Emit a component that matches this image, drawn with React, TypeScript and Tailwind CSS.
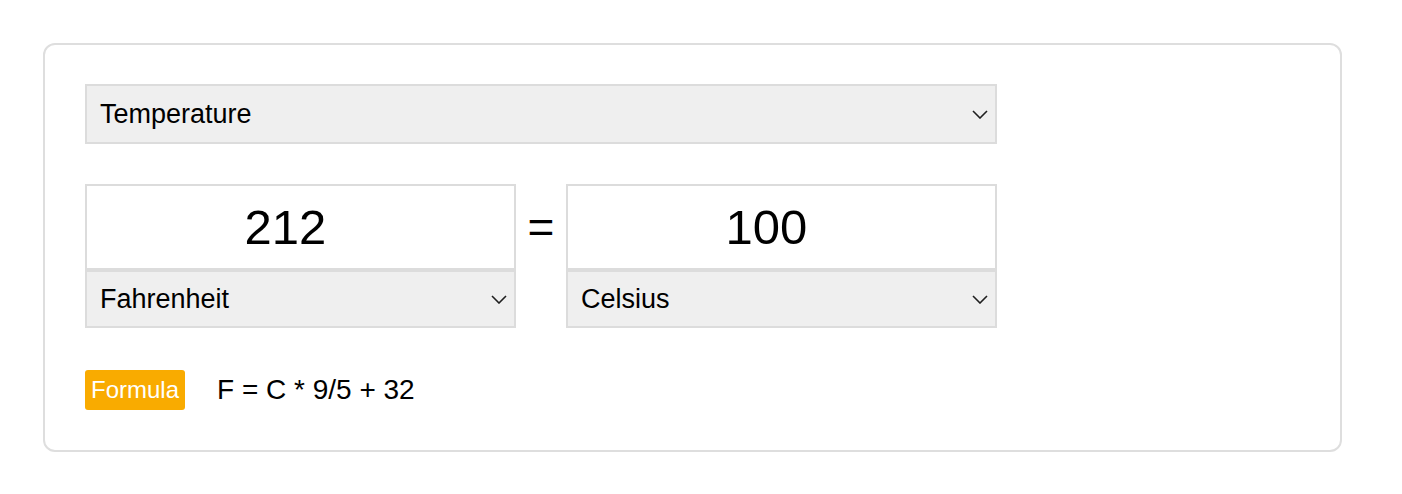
import React from 'react'

function Chevron() {
  return (
    <svg width="16" height="9" viewBox="0 0 16 9" fill="none" className="shrink-0">
      <path d="M1 1l7 7 7-7" stroke="#1f1f1f" strokeWidth="1.6" />
    </svg>
  )
}

function FakeSelect({ label, className }: { label: string; className: string }) {
  return (
    <div
      className={`flex items-center justify-between border-2 border-[#dcdcdc] bg-[#efefef] pl-[13px] pr-[7px] text-[27px] text-black ${className}`}
    >
      <span>{label}</span>
      <Chevron />
    </div>
  )
}

function UnitColumn({ value, unit }: { value: string; unit: string }) {
  return (
    <div className="flex w-[431px] flex-col">
      <div className="flex h-[86px] items-center justify-center border-2 border-[#dcdcdc] bg-white pr-[30px] text-[49px] leading-none text-black">
        {value}
      </div>
      <FakeSelect label={unit} className="h-[58px]" />
    </div>
  )
}

export default function App() {
  return (
    <div className="min-h-[494px] bg-white pl-[43px] pt-[43px] font-['Liberation_Sans',Arial,sans-serif]">
      <div className="h-[409px] w-[1299px] rounded-[12px] border-2 border-[#dedede] bg-white pl-[40px] pt-[39px]">
        <FakeSelect label="Temperature" className="h-[60px] w-[912px]" />

        <div className="mt-[40px] flex">
          <UnitColumn value="212" unit="Fahrenheit" />
          <div className="flex h-[86px] w-[50px] items-center justify-center text-[46px] leading-none text-black">
            =
          </div>
          <UnitColumn value="100" unit="Celsius" />
        </div>

        <div className="mt-[41px] flex items-center">
          <span className="flex h-[40px] w-[100px] items-center justify-center rounded-[3px] bg-[#f9ab00] text-[24px] text-white">
            Formula
          </span>
          <span className="ml-[32px] text-[28px] text-black">F = C * 9/5 + 32</span>
        </div>
      </div>
    </div>
  )
}
